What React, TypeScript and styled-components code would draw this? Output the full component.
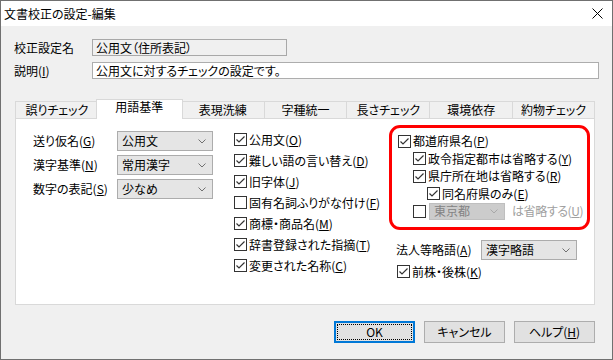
import React from 'react';
import styled, { createGlobalStyle } from 'styled-components';

const GlobalStyle = createGlobalStyle`
  html, body {
    margin: 0;
    padding: 0;
    background: #ffffff;
  }
  body {
    font-family: "Noto Sans CJK JP", "Noto Sans", sans-serif;
    font-size: 12px;
    color: #000;
    font-feature-settings: "palt";
  }
  u {
    text-underline-offset: 1px;
  }
`;

const Window = styled.div`
  width: 613px;
  height: 360px;
  box-sizing: border-box;
  border: 1px solid #707070;
  background: #f0f0f0;
  display: flex;
  flex-direction: column;
`;

const TitleBar = styled.div`
  height: 25px;
  flex: none;
  background: #fff;
  display: flex;
  align-items: center;
  justify-content: space-between;
  padding: 0 9px 0 3px;
  line-height: 16px;
`;

const Body = styled.div`
  flex: 1;
  display: flex;
  flex-direction: column;
  padding: 13px 12px 0 13px;
`;

const FieldRow = styled.div`
  display: grid;
  grid-template-columns: 78px auto;
  align-items: center;
  height: 17px;
  & + & {
    margin-top: 6px;
  }
`;

const TextBox = styled.div<{ $width: number; $readOnly?: boolean }>`
  box-sizing: border-box;
  width: ${(p) => p.$width}px;
  height: 17px;
  line-height: 15px;
  padding: 0 3px;
  border: 1px solid ${(p) => (p.$readOnly ? '#a8a8a8' : '#adadad')};
  background: ${(p) => (p.$readOnly ? '#f0f0f0' : '#ffffff')};
  white-space: nowrap;
`;

const TabBar = styled.div`
  margin: 20px 5px -1px 1px;
  height: 20px;
  display: grid;
  grid-template-columns: repeat(7, 1fr);
`;

const Tab = styled.div<{ $active?: boolean }>`
  box-sizing: border-box;
  display: flex;
  align-items: center;
  justify-content: center;
  white-space: nowrap;
  line-height: 16px;
  border: 1px solid #d9d9d9;
  border-bottom: none;
  border-right: none;
  background: #f0f0f0;
  margin-top: 2px;
  height: 17px;
  &:last-child {
    border-right: 1px solid #d9d9d9;
  }
  ${(p) =>
    p.$active &&
    `
    position: relative;
    z-index: 1;
    margin: 0 -2px;
    height: 20px;
    padding-bottom: 6px;
    background: #ffffff;
    border-right: 1px solid #d9d9d9;
  `}
`;

const Panel = styled.div`
  box-sizing: border-box;
  height: 187px;
  margin: 0 5px 0 1px;
  border: 1px solid #d9d9d9;
  background: #fff;
  display: flex;
  align-items: flex-start;
  padding-left: 17px;
`;

const LeftCol = styled.div`
  margin-top: 12px;
  display: grid;
  grid-template-columns: 84px 96px;
  grid-auto-rows: 20px;
  row-gap: 4px;
  align-items: center;
  line-height: 16px;
`;

const MidCol = styled.div`
  margin: 10px 0 0 21px;
  width: 155px;
  display: flex;
  flex-direction: column;
`;

const RightCol = styled.div`
  margin-top: 6px;
  width: 201px;
  display: flex;
  flex-direction: column;
`;

const RedBox = styled.div`
  box-sizing: border-box;
  height: 105px;
  border: 3px solid #ff0000;
  border-radius: 11px;
  padding: 4.5px 0 0 6px;
  display: flex;
  flex-direction: column;
`;

const CheckRow = styled.div<{ $height?: number; $indent?: number }>`
  display: flex;
  align-items: center;
  height: ${(p) => p.$height ?? 21}px;
  padding-left: ${(p) => p.$indent ?? 0}px;
  white-space: nowrap;
  line-height: 16px;
`;

const Box = styled.span`
  box-sizing: border-box;
  flex: none;
  width: 13px;
  height: 13px;
  border: 1px solid #333333;
  background: #ffffff;
  margin-right: 2px;
  display: flex;
  align-items: center;
  justify-content: center;
`;

const SelectBox = styled.div<{ $width: number; $height?: number; $disabled?: boolean }>`
  box-sizing: border-box;
  flex: none;
  width: ${(p) => p.$width}px;
  height: ${(p) => p.$height ?? 20}px;
  border: 1px solid ${(p) => (p.$disabled ? '#bfbfbf' : '#acacac')};
  background: ${(p) => (p.$disabled ? '#cccccc' : '#e5e5e5')};
  color: ${(p) => (p.$disabled ? '#838383' : '#000000')};
  display: flex;
  align-items: center;
  justify-content: space-between;
  padding: 0 6px 0 4px;
  line-height: 16px;
  white-space: nowrap;
`;

const Muted = styled.span`
  color: #a0a0a0;
  margin-left: 7px;
  letter-spacing: -0.4px;
`;

const CorpRow = styled.div`
  margin-top: 10px;
  padding-left: 7px;
  display: grid;
  grid-template-columns: 85px 96px;
  align-items: center;
  line-height: 16px;
`;

const ButtonRow = styled.div`
  margin: 16px 5px 0 0;
  display: flex;
  justify-content: flex-end;
  gap: 9px;
`;

const Button = styled.div<{ $default?: boolean }>`
  box-sizing: border-box;
  width: 81px;
  height: 22px;
  display: flex;
  align-items: center;
  justify-content: center;
  line-height: 16px;
  background: #e1e1e1;
  border: ${(p) => (p.$default ? '2px solid #0078d7' : '1px solid #adadad')};
  position: relative;
  ${(p) =>
    p.$default &&
    `
    &::after {
      content: '';
      position: absolute;
      inset: 1px;
      border: 1px dotted #000;
    }
  `}
`;

const Chevron = ({ color = '#707070' }: { color?: string }) => (
  <svg width="8" height="5" viewBox="0 0 8 5">
    <polyline points="0.5,0.5 4,4 7.5,0.5" fill="none" stroke={color} strokeWidth="1" />
  </svg>
);

const CloseIcon = () => (
  <svg width="11" height="11" viewBox="0 0 11 11">
    <path d="M0.5 0.5 L10.5 10.5 M10.5 0.5 L0.5 10.5" stroke="#000" strokeWidth="1" />
  </svg>
);

const Check = ({ checked }: { checked?: boolean }) => (
  <Box>
    {checked && (
      <svg width="11" height="11" viewBox="0 0 11 11">
        <polyline points="1.5,5.5 4,8 9.5,2.5" fill="none" stroke="#333" strokeWidth="1.2" />
      </svg>
    )}
  </Box>
);

const Select = ({
  text,
  width,
  height,
  disabled,
}: {
  text: string;
  width: number;
  height?: number;
  disabled?: boolean;
}) => (
  <SelectBox $width={width} $height={height} $disabled={disabled}>
    <span>{text}</span>
    <Chevron color={disabled ? '#a8a8a8' : '#707070'} />
  </SelectBox>
);

const Key = ({ label, k }: { label: string; k: string }) => (
  <span>
    {label}(<u>{k}</u>)
  </span>
);

const tabs = ['誤りチェック', '用語基準', '表現洗練', '字種統一', '長さチェック', '環境依存', '約物チェック'];

const midItems: { label: string; k: string; checked: boolean }[] = [
  { label: '公用文', k: 'O', checked: true },
  { label: '難しい語の言い替え', k: 'D', checked: true },
  { label: '旧字体', k: 'J', checked: true },
  { label: '固有名詞ふりがな付け', k: 'F', checked: false },
  { label: '商標・商品名', k: 'M', checked: true },
  { label: '辞書登録された指摘', k: 'T', checked: true },
  { label: '変更された名称', k: 'C', checked: true },
];

export default function App() {
  return (
    <>
      <GlobalStyle />
      <Window>
        <TitleBar>
          <span>文書校正の設定-編集</span>
          <CloseIcon />
        </TitleBar>
        <Body>
          <FieldRow>
            <span>校正設定名</span>
            <TextBox $width={195} $readOnly>
              公用文（住所表記）
            </TextBox>
          </FieldRow>
          <FieldRow>
            <Key label="説明" k="I" />
            <TextBox $width={507}>公用文に対するチェックの設定です。</TextBox>
          </FieldRow>

          <TabBar>
            {tabs.map((t) => (
              <Tab key={t} $active={t === '用語基準'}>
                {t}
              </Tab>
            ))}
          </TabBar>
          <Panel>
            <LeftCol>
              <Key label="送り仮名" k="G" />
              <Select text="公用文" width={96} />
              <Key label="漢字基準" k="N" />
              <Select text="常用漢字" width={96} />
              <Key label="数字の表記" k="S" />
              <Select text="少なめ" width={96} />
            </LeftCol>

            <MidCol>
              {midItems.map((item) => (
                <CheckRow key={item.label}>
                  <Check checked={item.checked} />
                  <Key label={item.label} k={item.k} />
                </CheckRow>
              ))}
            </MidCol>

            <RightCol>
              <RedBox>
                <CheckRow $height={17.5}>
                  <Check checked />
                  <Key label="都道府県名" k="P" />
                </CheckRow>
                <CheckRow $height={17.5} $indent={15}>
                  <Check checked />
                  <Key label="政令指定都市は省略する" k="Y" />
                </CheckRow>
                <CheckRow $height={17.5} $indent={15}>
                  <Check checked />
                  <Key label="県庁所在地は省略する" k="R" />
                </CheckRow>
                <CheckRow $height={17.5} $indent={29}>
                  <Check checked />
                  <Key label="同名府県のみ" k="E" />
                </CheckRow>
                <CheckRow $height={17.5} $indent={15}>
                  <Check />
                  <span style={{ width: 1 }} />
                  <Select text="東京都" width={76} height={17} disabled />
                  <Muted>
                    は省略する(<u>U</u>)
                  </Muted>
                </CheckRow>
              </RedBox>
              <CorpRow>
                <Key label="法人等略語" k="A" />
                <Select text="漢字略語" width={96} />
              </CorpRow>
              <CheckRow $height={17} $indent={8} style={{ marginTop: 3 }}>
                <Check checked />
                <Key label="前株・後株" k="K" />
              </CheckRow>
            </RightCol>
          </Panel>

          <ButtonRow>
            <Button $default>OK</Button>
            <Button>キャンセル</Button>
            <Button>
              <Key label="ヘルプ" k="H" />
            </Button>
          </ButtonRow>
        </Body>
      </Window>
    </>
  );
}
